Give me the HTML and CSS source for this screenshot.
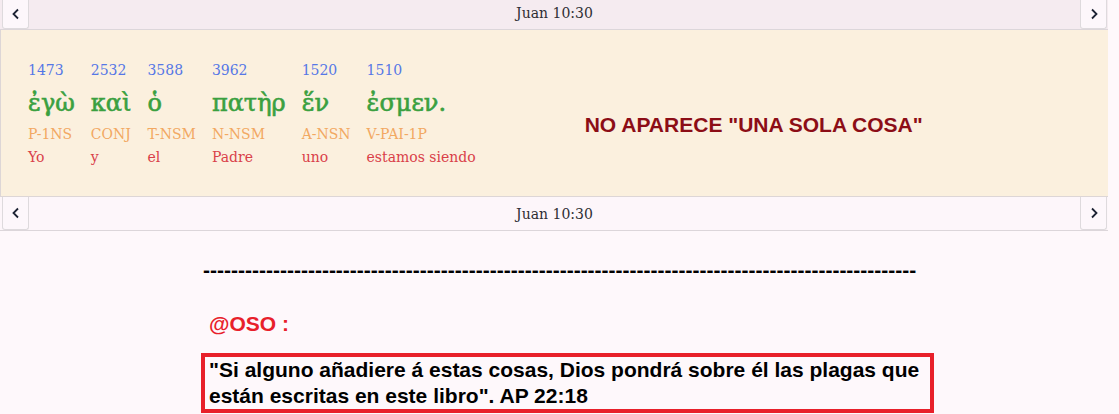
FILE: index.html
```html
<!DOCTYPE html>
<html lang="es">
<head>
<meta charset="utf-8">
<title>Juan 10:30</title>
<link rel="stylesheet" href="styles.css">
</head>
<body>
<div class="wrap">
  <div class="nav nav-top">
    <button class="nav-btn" aria-label="Anterior"><svg width="10" height="12" viewBox="0 0 10 12"><path d="M7 1.5 L2.5 6 L7 10.5" fill="none" stroke="#1c2233" stroke-width="1.8"/></svg></button>
    <div class="nav-title">Juan 10:30</div>
    <button class="nav-btn" aria-label="Siguiente"><svg width="10" height="12" viewBox="0 0 10 12"><path d="M3 1.5 L7.5 6 L3 10.5" fill="none" stroke="#1c2233" stroke-width="1.8"/></svg></button>
  </div>
  <div class="panel">
    <div class="words">
      <div class="word"><span class="num">1473</span><span class="gr">ἐγὼ</span><span class="morph">P-1NS</span><span class="gloss">Yo</span></div>
      <div class="word"><span class="num">2532</span><span class="gr">καὶ</span><span class="morph">CONJ</span><span class="gloss">y</span></div>
      <div class="word"><span class="num">3588</span><span class="gr">ὁ</span><span class="morph">T-NSM</span><span class="gloss">el</span></div>
      <div class="word"><span class="num">3962</span><span class="gr">πατὴρ</span><span class="morph">N-NSM</span><span class="gloss">Padre</span></div>
      <div class="word"><span class="num">1520</span><span class="gr">ἕν</span><span class="morph">A-NSN</span><span class="gloss">uno</span></div>
      <div class="word"><span class="num">1510</span><span class="gr">ἐσμεν.</span><span class="morph">V-PAI-1P</span><span class="gloss">estamos siendo</span></div>
    </div>
    <div class="note">NO APARECE "UNA SOLA COSA"</div>
  </div>
  <div class="nav nav-bottom">
    <button class="nav-btn" aria-label="Anterior"><svg width="10" height="12" viewBox="0 0 10 12"><path d="M7 1.5 L2.5 6 L7 10.5" fill="none" stroke="#1c2233" stroke-width="1.8"/></svg></button>
    <div class="nav-title">Juan 10:30</div>
    <button class="nav-btn" aria-label="Siguiente"><svg width="10" height="12" viewBox="0 0 10 12"><path d="M3 1.5 L7.5 6 L3 10.5" fill="none" stroke="#1c2233" stroke-width="1.8"/></svg></button>
  </div>
</div>
<div class="post">
  <div class="dashes">------------------------------------------------------------------------------------------------------</div>
  <div class="mention">@OSO :</div>
  <div class="quote">"Si alguno añadiere á estas cosas, Dios pondrá sobre él las plagas que están escritas en este libro". AP 22:18</div>
</div>
</body>
</html>
```

FILE: styles.css
```css
html, body {
  margin: 0;
  padding: 0;
  background: #fef8fb;
}
.wrap {
  width: 1108px;
}
.nav {
  display: grid;
  grid-template-columns: 27px 1fr 27px;
  padding: 0 1px 0 2px;
  border-bottom: 1px solid #dcd6da;
}
.nav-top {
  height: 29px;
  background: #f5ebf0;
}
.nav-top .nav-title {
  padding-bottom: 3px;
}
.nav-bottom {
  height: 33px;
  background: #fdf6fa;
}
.nav-btn {
  margin: 0;
  padding: 0;
  background: #fdf7fb;
  border: 1px solid #dedadd;
  border-top: none;
  border-radius: 0 0 3px 3px;
  display: flex;
  align-items: center;
  justify-content: center;
}
.nav-title {
  display: flex;
  align-items: center;
  justify-content: center;
  font-family: "DejaVu Serif", serif;
  font-size: 14px;
  color: #2e2e33;
}
.panel {
  display: flex;
  align-items: flex-start;
  background: #fbf0de;
  border-left: 1px solid #ddd6d6;
  border-bottom: 1px solid #ddd6d6;
  height: 136px;
  padding: 30px 0 0 27px;
}
.words {
  display: flex;
  gap: 16px;
}
.word {
  display: flex;
  flex-direction: column;
  font-family: "DejaVu Serif", serif;
  font-size: 14px;
}
.num {
  color: #5577e6;
  line-height: 20px;
}
.gr {
  color: #3aa040;
  font-size: 24px;
  line-height: 42px;
  padding-top: 2px;
  -webkit-text-stroke: 0.6px #3aa040;
}
.morph {
  color: #f2a862;
  line-height: 20px;
}
.gloss {
  color: #d94049;
  line-height: 26px;
}
.note {
  margin: 53px 0 0 109px;
  font-family: "Liberation Sans", Arial, sans-serif;
  font-weight: bold;
  font-size: 21px;
  color: #8c0d16;
  line-height: 24px;
}
.post {
  margin: 27px 0 0 201px;
  width: 733px;
  font-family: "Liberation Sans", Arial, sans-serif;
  font-weight: bold;
  font-size: 21px;
}
.dashes {
  padding-left: 2px;
  line-height: 24px;
  color: #000;
  white-space: nowrap;
  overflow: hidden;
}
.mention {
  margin-top: 30px;
  padding-left: 8px;
  color: #e8202a;
  line-height: 24px;
}
.quote {
  margin-top: 17px;
  border: 4px solid #e8202a;
  padding: 0 4px;
  line-height: 26px;
  color: #000;
}
```
